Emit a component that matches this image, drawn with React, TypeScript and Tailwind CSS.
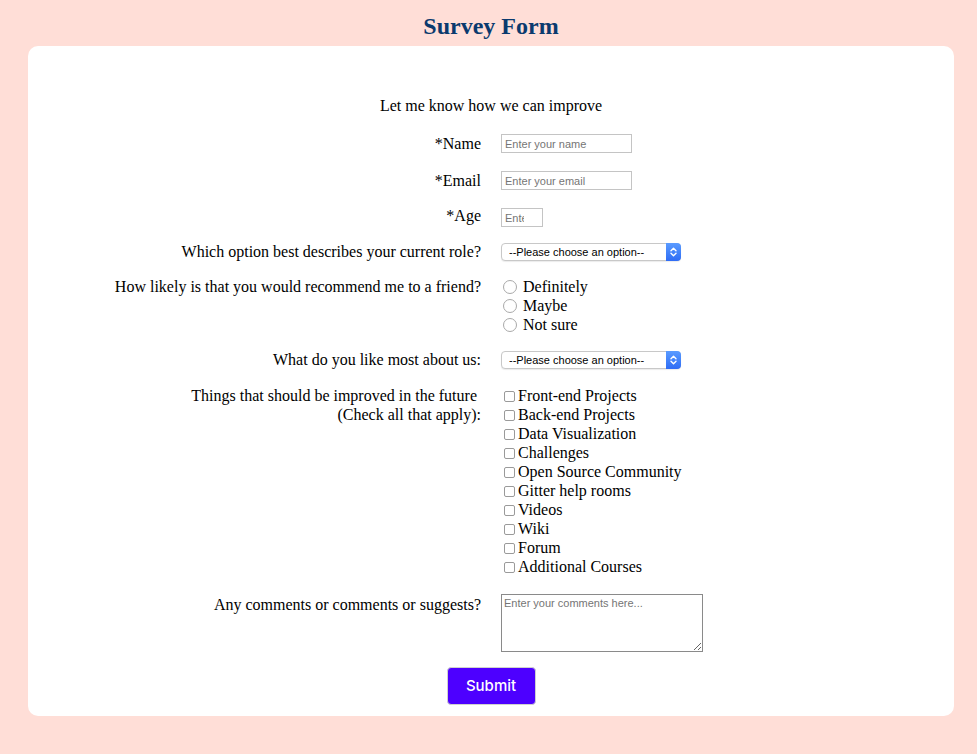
const ROLES = ['Student', 'Full-time job', 'Full-time learner', 'Prefer not to say', 'Other'];

const LIKES = ['Challenges', 'Projects', 'Community', 'Open Source'];

const IMPROVEMENTS = [
  'Front-end Projects',
  'Back-end Projects',
  'Data Visualization',
  'Challenges',
  'Open Source Community',
  'Gitter help rooms',
  'Videos',
  'Wiki',
  'Forum',
  'Additional Courses',
];

function Label({ children }: { children: React.ReactNode }) {
  return <div className="w-1/2 pr-[10px] text-right leading-[19px]">{children}</div>;
}

function Select({ options }: { options: string[] }) {
  return (
    <div className="relative h-[18px] w-[180px]">
      <select
        defaultValue=""
        className="block h-[18px] w-[180px] appearance-none rounded-[4px] border border-[#c8c8c8] bg-white pl-[7px] font-['Liberation_Sans',sans-serif] text-[11px] leading-[16px] text-black shadow-[0_1px_1px_rgba(0,0,0,0.08)] outline-none"
      >
        <option value="" disabled>
          --Please choose an option--
        </option>
        {options.map((o) => (
          <option key={o}>{o}</option>
        ))}
      </select>
      {/* blue stepper cap */}
      <span className="pointer-events-none absolute right-0 top-0 flex h-[18px] w-[15px] items-center justify-center rounded-r-[4px] bg-gradient-to-b from-[#5a9bff] to-[#2f6cf5]">
        <svg width="7" height="10" viewBox="0 0 7 10" fill="none" stroke="white" strokeWidth="1.4" strokeLinecap="round" strokeLinejoin="round">
          <path d="M1 3.8 3.5 1.3 6 3.8" />
          <path d="M1 6.2 3.5 8.7 6 6.2" />
        </svg>
      </span>
    </div>
  );
}

const inputCls =
  "block h-[19px] border border-[#c4c4c4] px-[3px] font-['Liberation_Sans',sans-serif] text-[11px] placeholder:text-[#757575] outline-none";

export default function App() {
  return (
    <div className="min-h-[754px] bg-[#ffded7] pl-[28px] pr-[23px] pb-[38px] font-['Liberation_Serif',serif] text-[16px] text-black">
      <h1 className="pt-[11px] pb-[5px] text-center text-[24px] font-bold leading-[30px] text-[#0b3a6e]">
        Survey Form
      </h1>

      <form className="flex flex-col rounded-[10px] bg-white pt-[50px] pb-[11px]">
        <p className="text-center leading-[19px]">Let me know how we can improve</p>

        <div className="mt-[19px] flex">
          <Label>*Name</Label>
          <div className="w-1/2 pl-[10px]">
            <input type="text" placeholder="Enter your name" className={`${inputCls} w-[131px]`} />
          </div>
        </div>

        <div className="mt-[18px] flex">
          <Label>*Email</Label>
          <div className="w-1/2 pl-[10px]">
            <input type="email" placeholder="Enter your email" className={`${inputCls} w-[131px]`} />
          </div>
        </div>

        <div className="mt-[16px] flex">
          <Label>*Age</Label>
          <div className="w-1/2 pl-[10px]">
            <input type="number" placeholder="Enter your age" className={`${inputCls} mt-[2px] w-[42px]`} />
          </div>
        </div>

        <div className="mt-[15px] flex items-center">
          <Label>Which option best describes your current role?</Label>
          <div className="w-1/2 pl-[10px]">
            <Select options={ROLES} />
          </div>
        </div>

        <div className="mt-[16px] flex">
          <Label>How likely is that you would recommend me to a friend?</Label>
          <div className="flex w-1/2 flex-col pl-[10px]">
            {['Definitely', 'Maybe', 'Not sure'].map((r) => (
              <label key={r} className="flex items-center leading-[19px]">
                <input
                  type="radio"
                  name="recommend"
                  className="ml-[2px] mr-[6px] h-[14px] w-[14px] appearance-none rounded-full border border-[#a9a9a9] bg-white"
                />
                {r}
              </label>
            ))}
          </div>
        </div>

        <div className="mt-[16px] flex items-center">
          <Label>What do you like most about us:</Label>
          <div className="w-1/2 pl-[10px]">
            <Select options={LIKES} />
          </div>
        </div>

        <div className="mt-[17px] flex">
          <Label>
            Things that should be improved in the future&nbsp;
            <br />
            (Check all that apply):
          </Label>
          <div className="flex w-1/2 flex-col pl-[10px]">
            {IMPROVEMENTS.map((item) => (
              <label key={item} className="flex items-center leading-[19px]">
                <input
                  type="checkbox"
                  className="ml-[3px] mr-[3px] mt-[1px] h-[11px] w-[11px] appearance-none rounded-[2px] border border-[#9a9a9a] bg-white"
                />
                {item}
              </label>
            ))}
          </div>
        </div>

        <div className="mt-[18px] flex">
          <div className="w-1/2 pr-[10px] pt-[1px] text-right leading-[19px]">Any comments or comments or suggests?</div>
          <div className="w-1/2 pl-[10px]">
            <textarea
              placeholder="Enter your comments here..."
              className="block h-[58px] w-[202px] border border-[#8a8a8a] px-[2px] py-[1px] font-['Liberation_Sans',sans-serif] text-[11px] leading-[14px] placeholder:text-[#757575] outline-none"
            />
          </div>
        </div>

        <div className="mt-[15px] flex justify-center">
          <button
            type="submit"
            className="h-[38px] w-[89px] rounded-[4px] border border-[#d0d0d0] bg-[#4d00ff] font-['Inter',sans-serif] text-[15px] font-medium text-white"
          >
            Submit
          </button>
        </div>
      </form>
    </div>
  );
}
